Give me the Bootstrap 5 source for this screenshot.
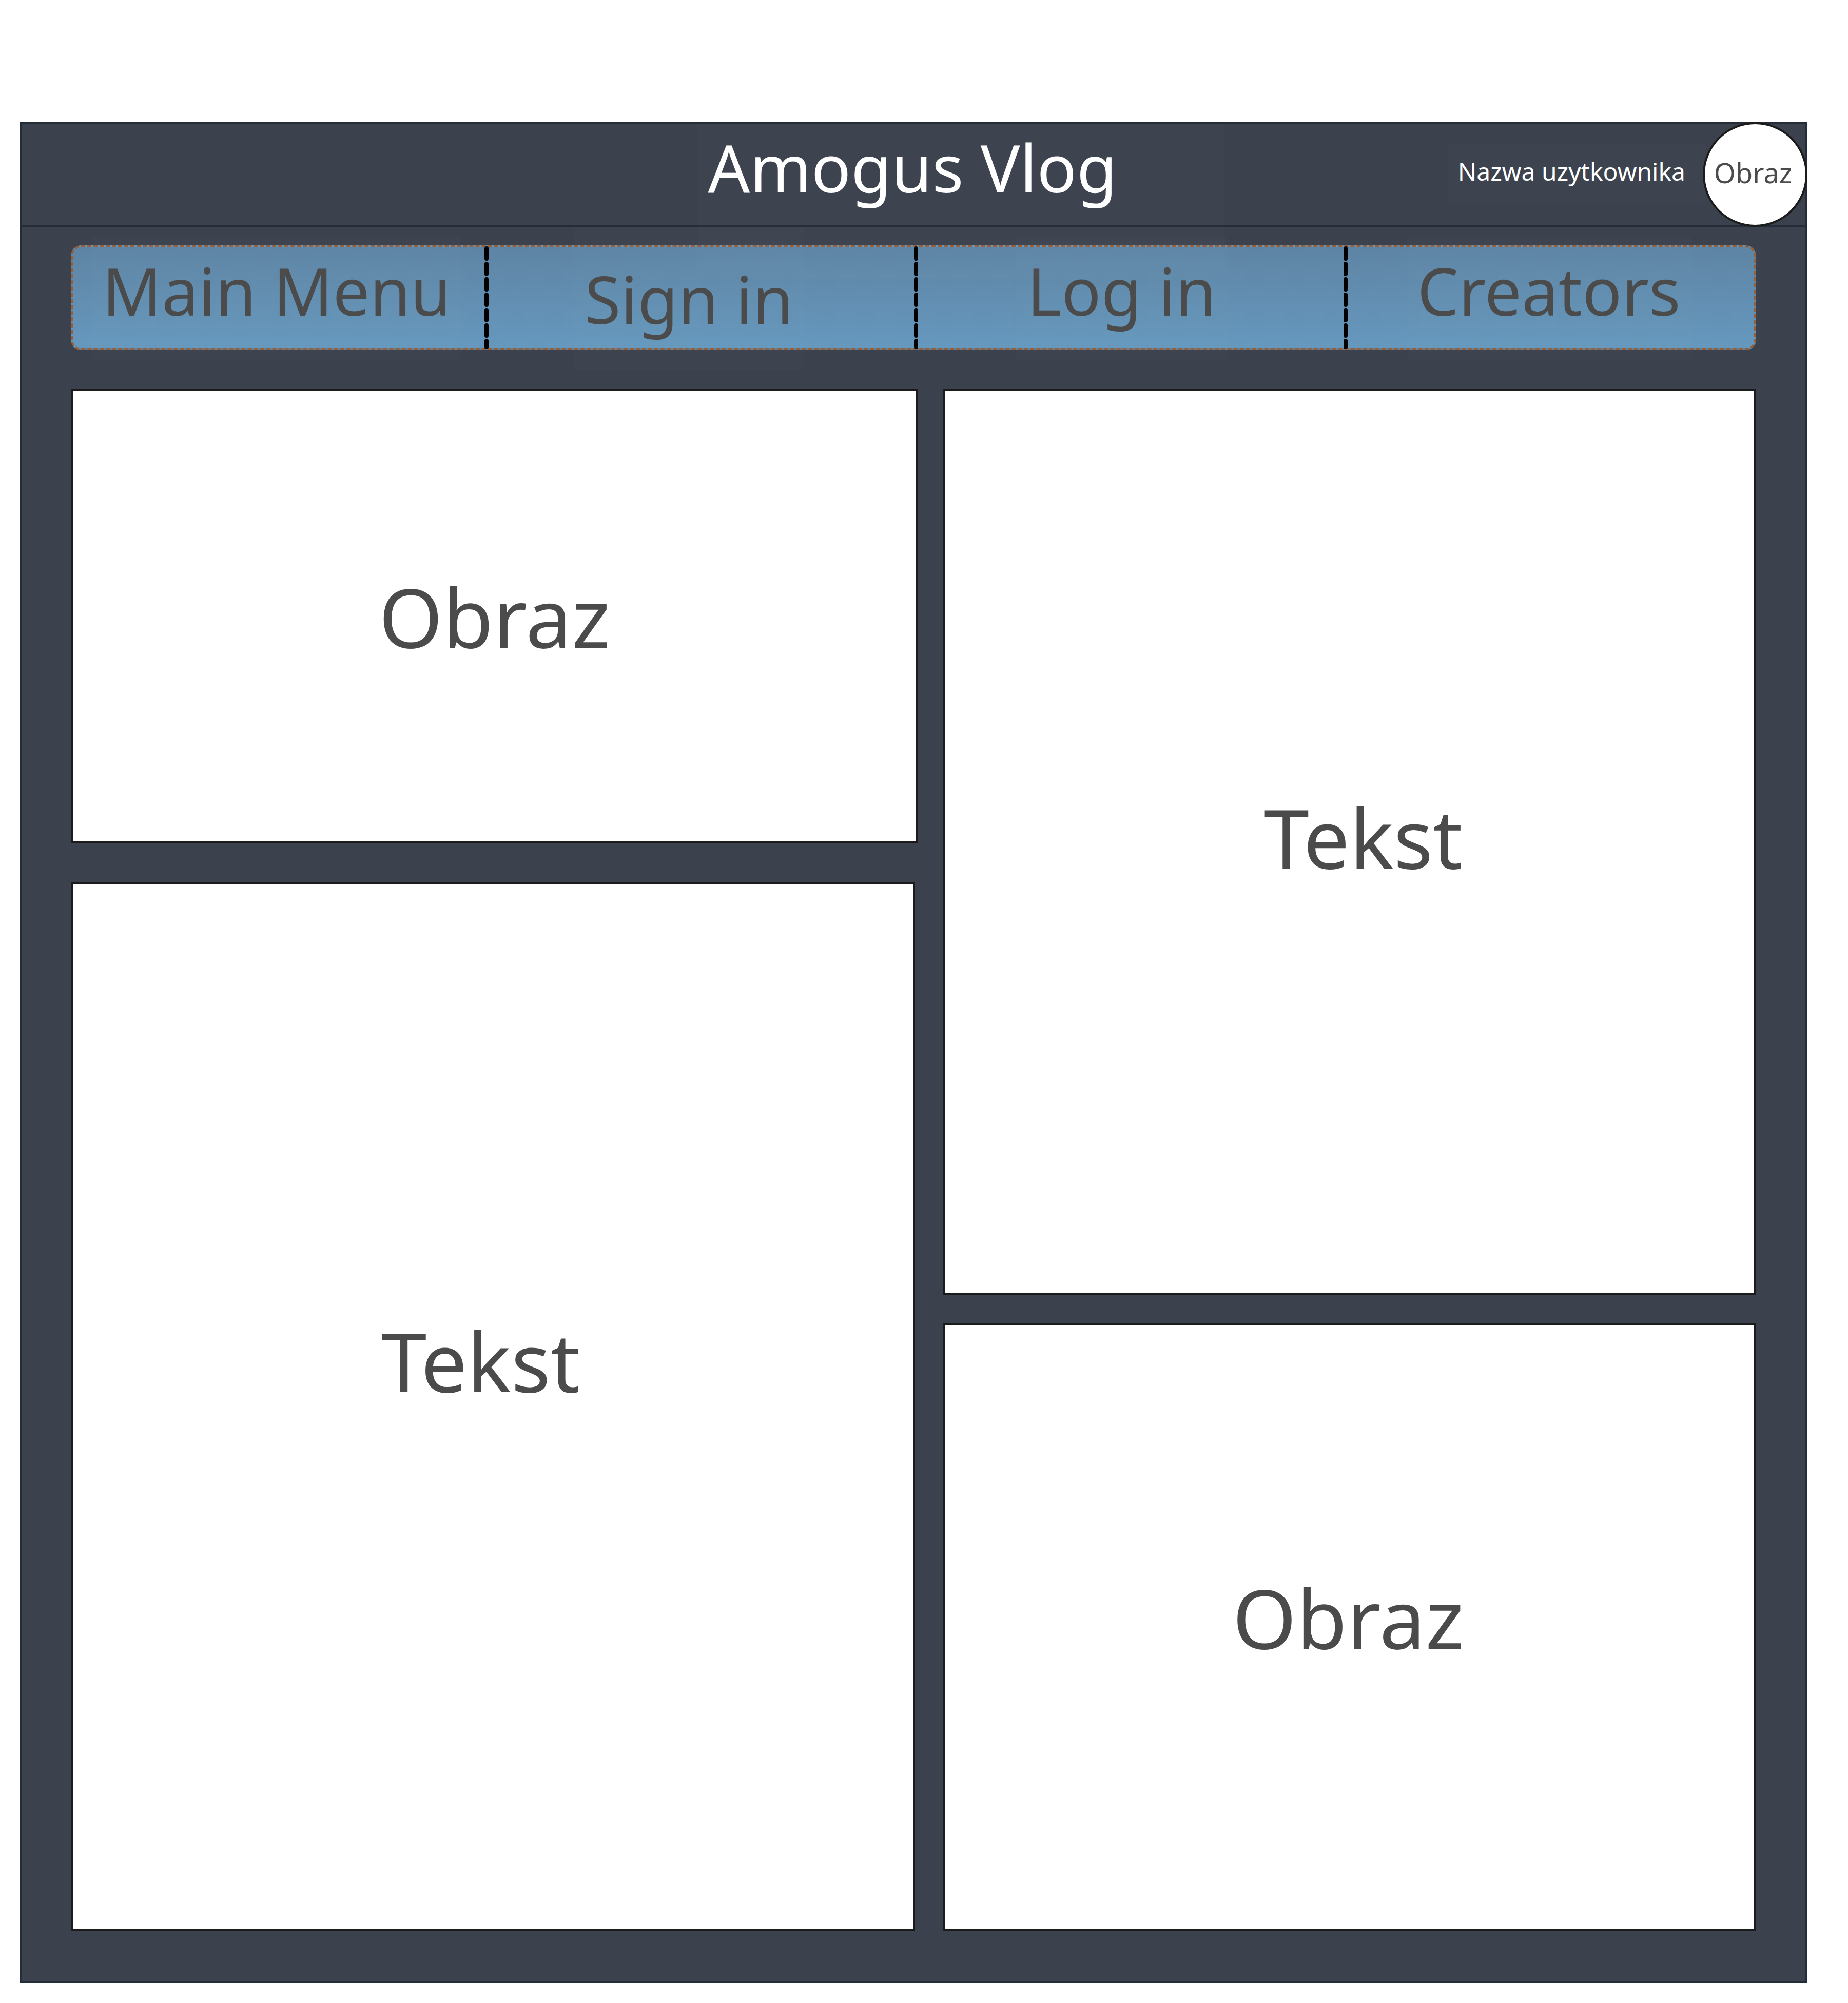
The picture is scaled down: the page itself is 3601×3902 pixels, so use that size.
<!DOCTYPE html>
<html lang="pl">
<head>
<meta charset="utf-8">
<meta name="viewport" content="width=device-width, initial-scale=1">
<title>Amogus Vlog</title>
<link href="https://cdn.jsdelivr.net/npm/bootstrap@5.3.0/dist/css/bootstrap.min.css" rel="stylesheet">
<style>
  body { font-family: "Noto Sans", sans-serif; color: #4b4b4b; background: #fff; }
  .page-frame { margin: 238px 79px 38px 38px; background: #3c424d; }
  .top-bar { height: 204px; border: 4px solid #242c37; }
  .veil { background: rgba(255, 255, 255, .012); }
  .site-title {
    margin: 0 0 -104px 37.9%; padding: 0 20px; width: 1026px; height: 300px;
    font-size: 128px; line-height: 168px; font-weight: 400; pointer-events: none;
  }
  .user-name { height: 120px; padding: 0 38px 12px 20px; font-size: 48px; }
  .avatar {
    width: 204px; height: 204px; margin: -4px; padding: 0 8px 8px 0;
    border: 4px solid #1b1b1b; font-size: 54px; color: #4b4b4b;
  }
  .page-body { border: 4px solid #242c37; border-top: 0; padding: 36px 96px 97px; }
  .main-menu {
    height: 204px; margin-bottom: 76px; border: 4px dashed #945f3b; border-radius: 20px;
    background: linear-gradient(#5e84a4, #6698be);
  }
  .menu-cell { flex: 829 1 0; }
  .menu-cell-first { flex-grow: 802; }
  .menu-cell-last { flex-grow: 792; }
  .menu-link {
    height: 240px; margin: -24px 8px -24px 0; padding: 0 20px 28px;
    font-size: 128px; line-height: 174px; color: #4b4b4b; text-decoration: none;
  }
  .menu-link-tall { height: 280px; margin: -44px 48px -44px 0; padding: 4px 20px 0; }
  .menu-link-third { margin-right: 36px; }
  .menu-rule { flex: none; width: 8px; height: 200px; margin: -2px 0; }
  .panels { gap: 49px; }
  .col-wide { flex: 1651 1 0; gap: 76px; }
  .col-slim { flex: 1584 1 0; gap: 56px; }
  .panel { background: #fff; border: 4px solid #1b1b1b; font-size: 160px; line-height: 218px; }
  .panel-photo { min-height: 884px; }
  .panel-story { min-height: 2044px; margin-right: 6px; padding: 0 48px 180px 0; }
  .panel-text { min-height: 1764px; padding: 0 0 20px 52px; }
  .panel-picture { min-height: 1184px; padding: 0 6px 40px 0; }
</style>
</head>
<body>
<div class="page-frame">
  <header class="top-bar d-flex align-items-center position-relative text-white">
    <h1 class="site-title veil align-self-start text-nowrap flex-shrink-0">Amogus Vlog</h1>
    <div class="d-flex align-items-center ms-auto">
      <span class="user-name veil d-flex align-items-center text-nowrap">Nazwa uzytkownika</span>
      <div class="avatar rounded-circle bg-white d-flex align-items-center justify-content-center">Obraz</div>
    </div>
  </header>

  <div class="page-body">
    <nav class="main-menu d-flex align-items-center" aria-label="Main">
      <div class="menu-cell menu-cell-first d-flex justify-content-center">
        <a class="menu-link veil d-flex align-items-center text-nowrap" href="#">Main Menu</a>
      </div>
      <svg class="menu-rule" viewBox="0 0 8 200" aria-hidden="true"><path d="M4 4V196" stroke="#000" stroke-width="8" stroke-linecap="round" stroke-dasharray="20 10"/></svg>
      <div class="menu-cell d-flex justify-content-center">
        <a class="menu-link menu-link-tall veil d-flex align-items-center text-nowrap" href="#">Sign in</a>
      </div>
      <svg class="menu-rule" viewBox="0 0 8 200" aria-hidden="true"><path d="M4 4V196" stroke="#000" stroke-width="8" stroke-linecap="round" stroke-dasharray="20 10"/></svg>
      <div class="menu-cell d-flex justify-content-center">
        <a class="menu-link menu-link-third veil d-flex align-items-center text-nowrap" href="#">Log in</a>
      </div>
      <svg class="menu-rule" viewBox="0 0 8 200" aria-hidden="true"><path d="M4 4V196" stroke="#000" stroke-width="8" stroke-linecap="round" stroke-dasharray="20 10"/></svg>
      <div class="menu-cell menu-cell-last d-flex justify-content-center">
        <a class="menu-link veil d-flex align-items-center text-nowrap" href="#">Creators</a>
      </div>
    </nav>

    <main class="panels d-flex">
      <div class="col-wide d-flex flex-column">
        <section class="panel panel-photo d-flex align-items-center justify-content-center">Obraz</section>
        <section class="panel panel-story flex-grow-1 d-flex align-items-center justify-content-center">Tekst</section>
      </div>
      <div class="col-slim d-flex flex-column">
        <section class="panel panel-text d-flex align-items-center justify-content-center">Tekst</section>
        <section class="panel panel-picture flex-grow-1 d-flex align-items-center justify-content-center">Obraz</section>
      </div>
    </main>
  </div>
</div>
<script src="https://cdn.jsdelivr.net/npm/bootstrap@5.3.0/dist/js/bootstrap.bundle.min.js"></script>
</body>
</html>
